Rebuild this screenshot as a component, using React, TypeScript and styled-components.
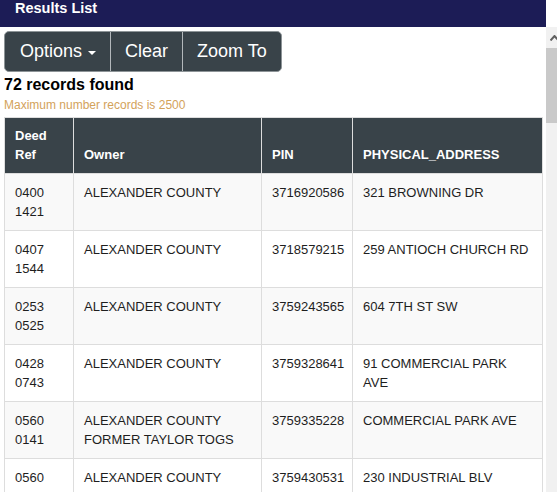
import React from "react";
import styled, { createGlobalStyle } from "styled-components";

const GlobalStyle = createGlobalStyle`
  html, body {
    margin: 0;
    padding: 0;
    overflow: hidden;
    background: #ffffff;
  }
  body {
    font-family: "Liberation Sans", Arial, sans-serif;
  }
`;

const Page = styled.div`
  display: flex;
  align-items: flex-start;
  width: 563px;
  height: 492px;
  overflow: hidden;
`;

const Main = styled.div`
  flex: none;
  width: 546px;
  display: flex;
  flex-direction: column;
`;

const TitleBar = styled.div`
  flex: none;
  height: 27px;
  background: #1c1c56;
  color: #ffffff;
  font-weight: bold;
  font-size: 14.5px;
  line-height: 17px;
  padding-left: 15px;
  box-sizing: border-box;
`;

const Panel = styled.div`
  flex: none;
  padding: 4px 0 0 4px;
  display: flex;
  flex-direction: column;
  align-items: flex-start;
`;

const BtnGroup = styled.div`
  display: flex;
  height: 41px;
  border: 1px solid #8d9497;
  border-radius: 5px;
  background: #394349;
  box-sizing: border-box;
  overflow: hidden;
`;

const Btn = styled.div<{ $first?: boolean }>`
  display: flex;
  align-items: center;
  padding: 0 14px 0 ${(p) => (p.$first ? "15px" : "14px")};
  color: #ffffff;
  font-size: 18px;
  border-left: ${(p) => (p.$first ? "none" : "1px solid #b3b8bb")};
`;

const Caret = styled.span`
  display: inline-block;
  width: 0;
  height: 0;
  margin-left: 6px;
  margin-top: 2px;
  border-top: 4px solid #ffffff;
  border-left: 4px solid transparent;
  border-right: 4px solid transparent;
`;

const Count = styled.div`
  margin-top: 4px;
  font-weight: bold;
  font-size: 16px;
  line-height: 18px;
  color: #000000;
`;

const Note = styled.div`
  margin-top: 3px;
  font-size: 12px;
  line-height: 16px;
  color: #d3a25a;
`;

const Table = styled.table`
  margin-top: 4px;
  border-collapse: collapse;
  table-layout: fixed;
  width: 538px;
  font-size: 13px;
  border: 1px solid #dddddd;
`;

const Th = styled.th`
  background: #394349;
  color: #ffffff;
  font-weight: bold;
  text-align: left;
  vertical-align: bottom;
  line-height: 19px;
  padding: 8px 10px 9px 10px;
  border: 1px solid #dddddd;
`;

const Tr = styled.tr<{ $odd: boolean }>`
  background: ${(p) => (p.$odd ? "#f9f9f9" : "#ffffff")};
`;

const Td = styled.td`
  color: #1e1e1e;
  vertical-align: top;
  line-height: 19px;
  padding: 9px 10px 9px 10px;
  border: 1px solid #dddddd;
`;

const ScrollBar = styled.div`
  flex: none;
  width: 17px;
  height: 465px;
  margin-top: 27px;
  background: #f1f1f1;
  display: flex;
  flex-direction: column;
`;

const ScrollArrow = styled.div`
  flex: none;
  height: 21px;
  display: flex;
  align-items: center;
  justify-content: center;
`;

const Thumb = styled.div`
  flex: none;
  height: 75px;
  margin: 0 2px 0 0;
  background: #c9c9c9;
`;

const rows = [
  ["0400 1421", "ALEXANDER COUNTY", "3716920586", "321 BROWNING DR"],
  ["0407 1544", "ALEXANDER COUNTY", "3718579215", "259 ANTIOCH CHURCH RD"],
  ["0253 0525", "ALEXANDER COUNTY", "3759243565", "604 7TH ST SW"],
  ["0428 0743", "ALEXANDER COUNTY", "3759328641", "91 COMMERCIAL PARK AVE"],
  ["0560 0141", "ALEXANDER COUNTY FORMER TAYLOR TOGS", "3759335228", "COMMERCIAL PARK AVE"],
  ["0560 0141", "ALEXANDER COUNTY FORMER TAYLOR TOGS", "3759430531", "230 INDUSTRIAL BLV"],
];

export default function App() {
  return (
    <>
      <GlobalStyle />
      <Page>
        <Main>
          <TitleBar>Results List</TitleBar>
          <Panel>
            <BtnGroup>
              <Btn $first>
                Options
                <Caret />
              </Btn>
              <Btn>Clear</Btn>
              <Btn>Zoom To</Btn>
            </BtnGroup>
            <Count>72 records found</Count>
            <Note>Maximum number records is 2500</Note>
            <Table>
              <colgroup>
                <col style={{ width: 69 }} />
                <col style={{ width: 188 }} />
                <col style={{ width: 91 }} />
                <col style={{ width: 190 }} />
              </colgroup>
              <thead>
                <tr>
                  <Th>Deed Ref</Th>
                  <Th>Owner</Th>
                  <Th>PIN</Th>
                  <Th>PHYSICAL_ADDRESS</Th>
                </tr>
              </thead>
              <tbody>
                {rows.map((r, i) => (
                  <Tr key={i} $odd={i % 2 === 0}>
                    {r.map((c, j) => (
                      <Td key={j}>{c}</Td>
                    ))}
                  </Tr>
                ))}
              </tbody>
            </Table>
          </Panel>
        </Main>
        <ScrollBar>
          <ScrollArrow>
            <svg width="9" height="6" viewBox="0 0 9 6">
              <path d="M0.5 5.5 L4.5 1 L8.5 5.5" fill="none" stroke="#606060" strokeWidth="2" />
            </svg>
          </ScrollArrow>
          <Thumb />
        </ScrollBar>
      </Page>
    </>
  );
}
